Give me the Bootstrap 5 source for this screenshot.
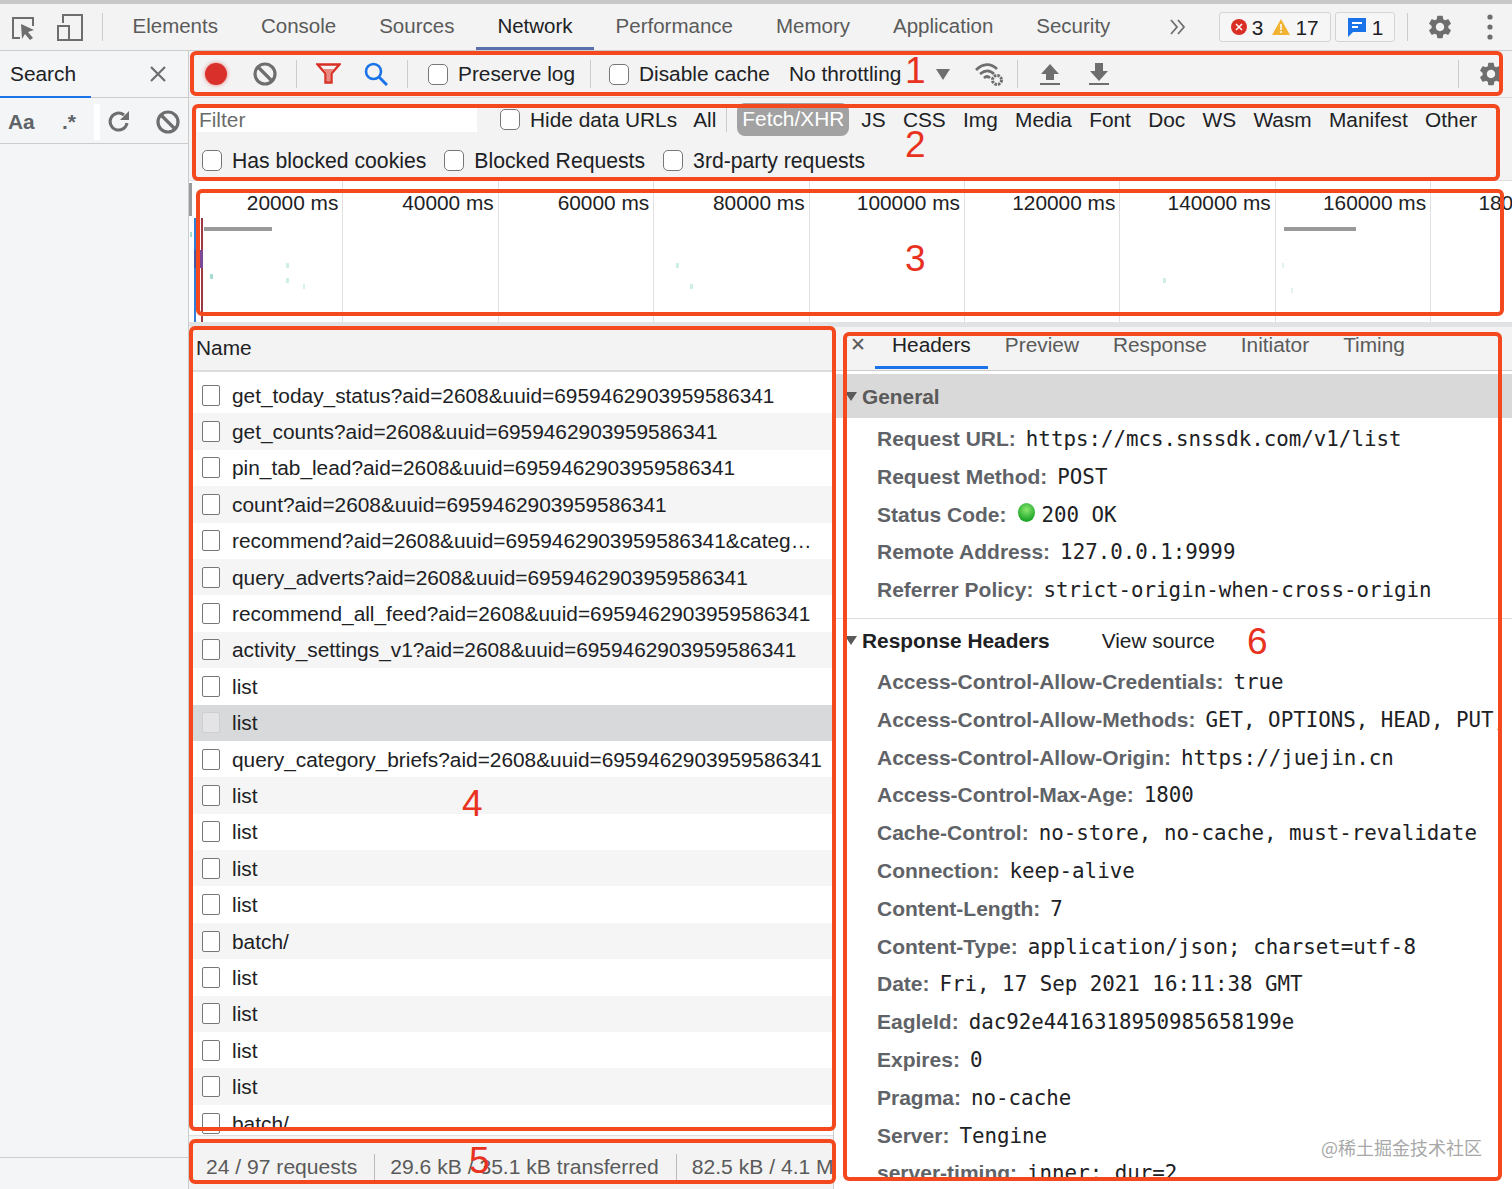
<!DOCTYPE html>
<html lang="en">
<head>
  <meta charset="UTF-8">
  <title>DevTools Network</title>
  <link href="https://cdn.jsdelivr.net/npm/bootstrap@5.3.0/dist/css/bootstrap.min.css" rel="stylesheet">
  <style>
    body { width: 1512px; height: 1189px; overflow: hidden; background: #fff; color: #202124; font-family: "Liberation Sans", Arial, sans-serif; font-size: 20.85px; line-height: 1.2; position: relative; }
    .top-strip { height: 4px; background: #c8c8c8; }
    .tab-bar { height: 47px; background: #f3f3f3; border-bottom: 1px solid #ccc; }
    .tab-icons { width: 102px; padding-left: 11px; gap: 21px; flex: none; }
    .tab-list { margin-left: 8px; }
    .dev-tab { color: #5a5a5a; padding: 0 21.5px; height: 46px; line-height: 44px; text-decoration: none; font-size: 20.5px; }
    .dev-tab.on { color: #202124; border-bottom: 3px solid #5b6fae; }
    .tab-sep { width: 1px; height: 28px; background: #ccc; flex: none; }
    .count-box { height: 30px; border: 1px solid #d4d4d4; border-radius: 3px; padding: 0 11px; gap: 5px; background: #f6f6f6; }
    .side-pane { width: 188px; height: 1138px; flex: none; background: #f3f5f6; }
    .side-head { height: 47px; border-bottom: 1px solid #ccc; position: relative; padding: 0 21px 0 10px; }
    .side-blue { position: absolute; left: 0; bottom: -1px; width: 91px; height: 2px; background: #1a73e8; }
    .side-tools { height: 46px; border-bottom: 1px solid #ccc; padding: 2px 0 0 8px; }
    .side-white { width: 6px; height: 36px; background: #fff; margin-right: 7px; }
    .side-gap { flex: 1; }
    .side-foot { height: 32px; border-top: 1px solid #ccc; }
    .main-pane { flex: 1; min-width: 0; border-left: 1px solid #ccc; }
    .tool-row { height: 47px; background: #f3f3f3; border-bottom: 1px solid #ddd; padding-left: 15px; }
    .tool-txt { margin-bottom: 2px; }
    .rec-dot { filter: drop-shadow(0 0 2px rgba(217, 48, 44, .6)); }
    .filter-box { height: 83px; background: #f3f3f3; padding: 4px 0 0 8px; border-bottom: 1px solid #ddd; }
    .filter-input { width: 280px; height: 25px; background: #fff; border: 0; padding: 0 2px; color: #6b6b6b; font-size: 20.85px; }
    .filter-input::placeholder { color: #6b6b6b; opacity: 1; }
    .type-pill { padding: 0 5px; height: 33px; line-height: 31px; border-radius: 8px; background: #a2a2a2; color: #fff; margin-right: 12px; }
    .type-tag { margin-right: 17.3px; }
    .filter-second { height: 41px; margin: 3px 0 0 5px; font-size: 21.2px; }
    input.dt-check[type=checkbox] { width: 20px; height: 21px; margin: 0 10px 0 0; flex: none; background-color: #fff; border: 1px solid #777; border-radius: 5px; }
    .time-strip { height: 141px; position: relative; overflow: hidden; }
    .tick { width: 155.4px; flex: none; height: 100%; border-right: 1px solid #e0e0e0; text-align: right; padding: 9px 4px 0 0; white-space: nowrap; }
    .tick:first-child { margin-left: -1px; }
    .tl-mark { position: absolute; }
    .split-bar { height: 5px; background: #e0e2e4; }
    .lower-split { height: 862px; }
    .name-pane { width: 645px; flex: none; border-right: 1px solid #ccc; position: relative; overflow: hidden; }
    .name-head { height: 45px; background: #f3f3f3; border-bottom: 2px solid #ddd; padding-left: 7px; line-height: 41px; }
    .name-list { height: 763px; padding-top: 5px; overflow: hidden; }
    .req-row { height: 36.4px; padding-left: 13px; white-space: nowrap; }
    .req-row:nth-child(even) { background: #f5f5f5; }
    .req-row.picked { background: #d8d9db; }
    input.row-check[type=checkbox] { width: 18px; height: 21px; margin: 0 12px 0 0; flex: none; border: 1px solid #777; border-radius: 2px; }
    .req-row.picked input.row-check[type=checkbox] { background-color: #e4e4e6; border-color: #cfcfcf; }
    .name-text { overflow: hidden; text-overflow: ellipsis; width: 592px; white-space: nowrap; }
    .name-text.cut-short { width: 582px; }
    .status-row { height: 54px; background: #f3f3f3; border-top: 1px solid #ddd; padding: 18px 0 0 17px; color: #5a5a5a; white-space: nowrap; overflow: hidden; font-size: 21.1px; }
    .status-cell { padding-right: 17px; margin-right: 15px; border-right: 1px solid #bbb; height: 26px; line-height: 26px; }
    .detail-pane { flex: 1; min-width: 0; height: 853px; overflow: hidden; white-space: nowrap; }
    .detail-tabs { height: 44px; background: #f3f3f3; border-bottom: 1px solid #ccc; padding-left: 16px; }
    .detail-close { width: 25px; color: #5a5a5a; font-size: 19px; line-height: 36px; }
    .detail-tab { color: #5a5a5a; padding: 0 17px; height: 42px; line-height: 36px; }
    .detail-tab.on { color: #202124; border-bottom: 3px solid #1a73e8; }
    .sect-head { height: 44px; margin-top: 3px; margin-bottom: 2px; background: #d9d9d9; color: #5a5a5a; font-weight: 700; padding-left: 11px; }
    .sect-plain { height: 44px; margin-top: 9px; margin-bottom: 1px; font-weight: 700; padding-left: 11px; border-top: 1px solid #ddd; }
    .tri { width: 0; height: 0; border-left: 6px solid transparent; border-right: 6px solid transparent; border-top: 9px solid #5a5a5a; margin-right: 5px; flex: none; }
    .kv-row { height: 37.8px; padding-left: 43px; display: flex; align-items: baseline; line-height: 37px; }
    .kv-row b { color: #5f6368; margin-right: 10px; font-weight: 700; flex: none; font-size: 21px; }
    .mono { font-family: "DejaVu Sans Mono", "Liberation Mono", monospace; font-size: 20.8px; color: #202124; flex: none; }
    .status-dot { width: 17px; height: 19px; border-radius: 50%; background: radial-gradient(circle at 50% 35%, #8ae86f, #1fa82a 70%); margin: 0 7px 0 1px; flex: none; }
    .red-box { position: absolute; border: 4px solid #f4481f; border-radius: 6px; pointer-events: none; }
    .red-num { position: absolute; color: #e8321f; font-size: 37px; line-height: 1; }
    .stamp { position: absolute; left: 1321px; top: 1137px; color: #a8a8a8; font-family: "Noto Sans CJK SC", sans-serif; font-size: 18px; line-height: 1.2; }
  </style>
</head>
<body>
  <div class="top-strip"></div>

  <!-- top tabs -->
  <div class="tab-bar d-flex align-items-center">
    <div class="tab-icons d-flex align-items-center">
      <svg width="25" height="28" viewBox="0 0 25 28" fill="none"><path d="M9 25H2V5h20v8" stroke="#6e6e6e" stroke-width="2"/><path d="M10 11l13 6-6 2 5 6-3 2-5-6-3 5z" fill="#6e6e6e"/></svg>
      <svg width="27" height="28" viewBox="0 0 27 28" fill="none"><path d="M6 10V2h19v25H12" stroke="#6e6e6e" stroke-width="2"/><rect x="1" y="13" width="11" height="14" stroke="#6e6e6e" stroke-width="2"/></svg>
    </div>
    <span class="tab-sep"></span>
    <div class="tab-list d-flex align-self-start">
      <a class="dev-tab" href="#">Elements</a>
      <a class="dev-tab" href="#">Console</a>
      <a class="dev-tab" href="#">Sources</a>
      <a class="dev-tab on" href="#">Network</a>
      <a class="dev-tab" href="#">Performance</a>
      <a class="dev-tab" href="#">Memory</a>
      <a class="dev-tab" href="#">Application</a>
      <a class="dev-tab" href="#">Security</a>
    </div>
    <svg style="margin-left:37px" width="18" height="16" viewBox="0 0 18 16" fill="none"><path d="M2 1l6 7-6 7M9 1l6 7-6 7" stroke="#6e6e6e" stroke-width="1.8"/></svg>
    <div class="count-box d-flex align-items-center" style="margin-left:32px">
      <svg width="16" height="16" viewBox="0 0 16 16"><circle cx="8" cy="8" r="8" fill="#d93025"/><path d="M5 5l6 6M11 5l-6 6" stroke="#fff" stroke-width="1.5"/></svg>
      <span>3</span>
      <svg class="ms-1" width="18" height="16" viewBox="0 0 18 16"><path d="M9 0l9 16H0z" fill="#f2b233"/><path d="M9 5v6M9 12v2" stroke="#fff" stroke-width="1.5"/></svg>
      <span>17</span>
    </div>
    <div class="count-box d-flex align-items-center" style="margin-left:4px">
      <svg width="20" height="20" viewBox="0 0 20 20"><path d="M1 1h18v14H6l-5 5z" fill="#1a73e8"/><path d="M5 6h10M5 10h6" stroke="#fff" stroke-width="2"/></svg>
      <span>1</span>
    </div>
    <span class="tab-sep" style="margin-left:12px"></span>
    <svg style="margin-left:18px" width="28" height="28" viewBox="0 0 24 24"><path fill="#6e6e6e" d="M19.14 12.94c.04-.3.06-.61.06-.94 0-.32-.02-.64-.07-.94l2.03-1.58a.49.49 0 0 0 .12-.61l-1.92-3.32a.488.488 0 0 0-.59-.22l-2.39.96c-.5-.38-1.03-.7-1.62-.94l-.36-2.54a.484.484 0 0 0-.48-.41h-3.84c-.24 0-.43.17-.47.41l-.36 2.54c-.59.24-1.13.57-1.62.94l-2.39-.96c-.22-.08-.47 0-.59.22L2.74 8.87c-.12.21-.08.47.12.61l2.03 1.58c-.05.3-.09.63-.09.94s.02.64.07.94l-2.03 1.58a.49.49 0 0 0-.12.61l1.92 3.32c.12.22.37.29.59.22l2.39-.96c.5.38 1.03.7 1.62.94l.36 2.54c.05.24.24.41.48.41h3.84c.24 0 .44-.17.47-.41l.36-2.54c.59-.24 1.13-.56 1.62-.94l2.39.96c.22.08.47 0 .59-.22l1.92-3.32c.12-.22.07-.47-.12-.61l-2.01-1.58zM12 15.6c-1.98 0-3.6-1.62-3.6-3.6s1.62-3.6 3.6-3.6 3.6 1.62 3.6 3.6-1.62 3.6-3.6 3.6z"/></svg>
    <svg style="margin-left:33px" width="6" height="26" viewBox="0 0 6 26"><circle cx="3" cy="3" r="2.6" fill="#6e6e6e"/><circle cx="3" cy="13" r="2.6" fill="#6e6e6e"/><circle cx="3" cy="23" r="2.6" fill="#6e6e6e"/></svg>
  </div>

  <div class="d-flex">
    <!-- search drawer -->
    <div class="side-pane d-flex flex-column">
      <div class="side-head d-flex align-items-center justify-content-between">
        <span class="tool-txt">Search</span>
        <svg width="18" height="18" viewBox="0 0 18 18"><path d="M2 2l14 14M16 2L2 16" stroke="#6e6e6e" stroke-width="2.2"/></svg>
        <span class="side-blue"></span>
      </div>
      <div class="side-tools d-flex align-items-center">
        <b style="color:#5f6368;width:54px">Aa</b>
        <b style="color:#5f6368;width:32px">.*</b>
        <span class="side-white"></span>
        <svg width="24" height="24" viewBox="0 0 24 24" fill="none"><path d="M20 13a8.5 8.5 0 1 1-3-8" stroke="#6e6e6e" stroke-width="3"/><path d="M22 1v9h-9z" fill="#6e6e6e"/></svg>
        <svg class="ms-auto" style="margin-right:8px" width="24" height="24" viewBox="0 0 24 24" fill="none"><circle cx="12" cy="12" r="10" stroke="#6e6e6e" stroke-width="3.2"/><path d="M5 5l14 14" stroke="#6e6e6e" stroke-width="3.2"/></svg>
      </div>
      <div class="side-gap"></div>
      <div class="side-foot"></div>
    </div>

    <div class="main-pane">
      <!-- record toolbar -->
      <div class="tool-row d-flex align-items-center">
        <svg class="rec-dot" width="24" height="24" viewBox="0 0 24 24"><circle cx="12" cy="12" r="11" fill="#d9302c"/></svg>
        <svg style="margin-left:25px" width="24" height="24" viewBox="0 0 24 24" fill="none"><circle cx="12" cy="12" r="10" stroke="#6e6e6e" stroke-width="3.2"/><path d="M5 5l14 14" stroke="#6e6e6e" stroke-width="3.2"/></svg>
        <span class="tab-sep" style="margin-left:19px"></span>
        <svg style="margin-left:19px" width="25" height="22" viewBox="0 0 25 22" fill="none"><path d="M1.5 1.5h22l-8 9v9h-6v-9z" stroke="#d93025" stroke-width="2.4"/><path d="M7 6h11l-4 5v7h-3v-7z" fill="#e88a80"/></svg>
        <svg style="margin-left:23px" width="24" height="24" viewBox="0 0 24 24" fill="none"><circle cx="9.5" cy="9.5" r="7.5" stroke="#1a73e8" stroke-width="2.6"/><path d="M15 15l8 8" stroke="#1a73e8" stroke-width="3"/></svg>
        <span class="tab-sep" style="margin-left:19px"></span>
        <input class="form-check-input dt-check" type="checkbox" style="margin-left:20px">
        <span class="tool-txt">Preserve log</span>
        <span class="tab-sep" style="margin-left:15px"></span>
        <input class="form-check-input dt-check" type="checkbox" style="margin-left:18px">
        <span class="tool-txt">Disable cache</span>
        <span class="tool-txt" style="margin-left:19px">No throttling</span>
        <span style="margin-left:35px;width:0;height:0;border-left:7px solid transparent;border-right:7px solid transparent;border-top:11px solid #6e6e6e"></span>
        <svg style="margin-left:24px" width="30" height="26" viewBox="0 0 30 26" fill="none"><path d="M2 9c7-7 15-7 21-1M6 13c5-4 10-4 14 0M10 17c2-2 4-2 6 0" stroke="#6e6e6e" stroke-width="2.6"/><circle cx="23" cy="19" r="4.5" stroke="#6e6e6e" stroke-width="3" stroke-dasharray="2.5 1"/></svg>
        <span class="tab-sep" style="margin-left:13px"></span>
        <svg style="margin-left:22px" width="20" height="24" viewBox="0 0 20 24"><path d="M10 2l9 10h-5v6H6v-6H1z" fill="#6e6e6e"/><path d="M0 22h20" stroke="#6e6e6e" stroke-width="2"/></svg>
        <svg style="margin-left:29px" width="20" height="24" viewBox="0 0 20 24"><path d="M10 19L1 9h5V1h8v8h5z" fill="#6e6e6e"/><path d="M0 22h20" stroke="#6e6e6e" stroke-width="2"/></svg>
        <span class="tab-sep ms-auto"></span>
        <svg style="margin:0 7px 0 18px" width="28" height="28" viewBox="0 0 24 24"><path fill="#6e6e6e" d="M19.14 12.94c.04-.3.06-.61.06-.94 0-.32-.02-.64-.07-.94l2.03-1.58a.49.49 0 0 0 .12-.61l-1.92-3.32a.488.488 0 0 0-.59-.22l-2.39.96c-.5-.38-1.03-.7-1.62-.94l-.36-2.54a.484.484 0 0 0-.48-.41h-3.84c-.24 0-.43.17-.47.41l-.36 2.54c-.59.24-1.13.57-1.62.94l-2.39-.96c-.22-.08-.47 0-.59.22L2.74 8.87c-.12.21-.08.47.12.61l2.03 1.58c-.05.3-.09.63-.09.94s.02.64.07.94l-2.03 1.58a.49.49 0 0 0-.12.61l1.92 3.32c.12.22.37.29.59.22l2.39-.96c.5.38 1.03.7 1.62.94l.36 2.54c.05.24.24.41.48.41h3.84c.24 0 .44-.17.47-.41l.36-2.54c.59-.24 1.13-.56 1.62-.94l2.39.96c.22.08.47 0 .59-.22l1.92-3.32c.12-.22.07-.47-.12-.61l-2.01-1.58zM12 15.6c-1.98 0-3.6-1.62-3.6-3.6s1.62-3.6 3.6-3.6 3.6 1.62 3.6 3.6-1.62 3.6-3.6 3.6z"/></svg>
      </div>

      <!-- filter -->
      <div class="filter-box">
        <div class="d-flex align-items-center" style="height:35px">
          <input class="filter-input" type="text" placeholder="Filter">
          <input class="form-check-input dt-check" type="checkbox" style="margin-left:23px">
          <span>Hide data URLs</span>
          <span style="margin-left:16px">All</span>
          <span class="tab-sep" style="margin:0 10px;height:24px"></span>
          <span class="type-pill">Fetch/XHR</span>
          <span class="type-tag">JS</span><span class="type-tag">CSS</span><span class="type-tag">Img</span><span class="type-tag">Media</span><span class="type-tag">Font</span><span class="type-tag">Doc</span><span class="type-tag">WS</span><span class="type-tag">Wasm</span><span class="type-tag">Manifest</span><span>Other</span>
        </div>
        <div class="filter-second d-flex align-items-center">
          <input class="form-check-input dt-check" type="checkbox"><span>Has blocked cookies</span>
          <input class="form-check-input dt-check" type="checkbox" style="margin-left:18px"><span>Blocked Requests</span>
          <input class="form-check-input dt-check" type="checkbox" style="margin-left:18px"><span>3rd-party requests</span>
        </div>
      </div>

      <!-- timeline overview -->
      <div class="time-strip d-flex">
        <div class="tick">20000 ms</div>
        <div class="tick">40000 ms</div>
        <div class="tick">60000 ms</div>
        <div class="tick">80000 ms</div>
        <div class="tick">100000 ms</div>
        <div class="tick">120000 ms</div>
        <div class="tick">140000 ms</div>
        <div class="tick">160000 ms</div>
        <div class="tick">180000 ms</div>
        <span class="tl-mark" style="left:0;top:2px;width:3px;height:33px;background:#9a9a9a"></span>
        <span class="tl-mark" style="left:1px;top:51px;width:2px;height:5px;background:#a7dcd0"></span>
        <span class="tl-mark" style="left:5px;top:37px;width:2px;height:104px;background:#2f7fd8"></span>
        <span class="tl-mark" style="left:12px;top:37px;width:2px;height:104px;background:#9c3a44"></span>
        <span class="tl-mark" style="left:5px;top:69px;width:3px;height:18px;background:#3f5ba8"></span>
        <span class="tl-mark" style="left:11px;top:69px;width:3px;height:18px;background:#7a4a96"></span>
        <span class="tl-mark" style="left:15px;top:46px;width:68px;height:4px;background:#999"></span>
        <span class="tl-mark" style="left:1095px;top:46px;width:72px;height:4px;background:#999"></span>
        <span class="tl-mark" style="left:21px;top:93px;width:3px;height:5px;background:#a7dcd0"></span>
        <span class="tl-mark" style="left:97px;top:82px;width:3px;height:5px;background:#cfeee7"></span>
        <span class="tl-mark" style="left:97px;top:97px;width:3px;height:5px;background:#cfeee7"></span>
        <span class="tl-mark" style="left:114px;top:103px;width:2px;height:5px;background:#d8f0ea"></span>
        <span class="tl-mark" style="left:487px;top:82px;width:3px;height:5px;background:#cfeee7"></span>
        <span class="tl-mark" style="left:501px;top:103px;width:3px;height:5px;background:#cfeee7"></span>
        <span class="tl-mark" style="left:974px;top:97px;width:3px;height:5px;background:#cfeee7"></span>
        <span class="tl-mark" style="left:1093px;top:82px;width:2px;height:5px;background:#e0f3ee"></span>
        <span class="tl-mark" style="left:1102px;top:107px;width:2px;height:5px;background:#e0f3ee"></span>
      </div>
      <div class="split-bar"></div>

      <div class="lower-split d-flex">
        <!-- request list -->
        <div class="name-pane">
          <div class="name-head">Name</div>
          <div class="name-list">
            <div class="req-row d-flex align-items-center"><input class="form-check-input row-check" type="checkbox"><span class="name-text">get_today_status?aid=2608&amp;uuid=6959462903959586341</span></div>
            <div class="req-row d-flex align-items-center"><input class="form-check-input row-check" type="checkbox"><span class="name-text">get_counts?aid=2608&amp;uuid=6959462903959586341</span></div>
            <div class="req-row d-flex align-items-center"><input class="form-check-input row-check" type="checkbox"><span class="name-text">pin_tab_lead?aid=2608&amp;uuid=6959462903959586341</span></div>
            <div class="req-row d-flex align-items-center"><input class="form-check-input row-check" type="checkbox"><span class="name-text">count?aid=2608&amp;uuid=6959462903959586341</span></div>
            <div class="req-row d-flex align-items-center"><input class="form-check-input row-check" type="checkbox"><span class="name-text cut-short">recommend?aid=2608&amp;uuid=6959462903959586341&amp;category_id=1</span></div>
            <div class="req-row d-flex align-items-center"><input class="form-check-input row-check" type="checkbox"><span class="name-text">query_adverts?aid=2608&amp;uuid=6959462903959586341</span></div>
            <div class="req-row d-flex align-items-center"><input class="form-check-input row-check" type="checkbox"><span class="name-text">recommend_all_feed?aid=2608&amp;uuid=6959462903959586341</span></div>
            <div class="req-row d-flex align-items-center"><input class="form-check-input row-check" type="checkbox"><span class="name-text">activity_settings_v1?aid=2608&amp;uuid=6959462903959586341</span></div>
            <div class="req-row d-flex align-items-center"><input class="form-check-input row-check" type="checkbox"><span class="name-text">list</span></div>
            <div class="req-row picked d-flex align-items-center"><input class="form-check-input row-check" type="checkbox"><span class="name-text">list</span></div>
            <div class="req-row d-flex align-items-center"><input class="form-check-input row-check" type="checkbox"><span class="name-text">query_category_briefs?aid=2608&amp;uuid=6959462903959586341</span></div>
            <div class="req-row d-flex align-items-center"><input class="form-check-input row-check" type="checkbox"><span class="name-text">list</span></div>
            <div class="req-row d-flex align-items-center"><input class="form-check-input row-check" type="checkbox"><span class="name-text">list</span></div>
            <div class="req-row d-flex align-items-center"><input class="form-check-input row-check" type="checkbox"><span class="name-text">list</span></div>
            <div class="req-row d-flex align-items-center"><input class="form-check-input row-check" type="checkbox"><span class="name-text">list</span></div>
            <div class="req-row d-flex align-items-center"><input class="form-check-input row-check" type="checkbox"><span class="name-text">batch/</span></div>
            <div class="req-row d-flex align-items-center"><input class="form-check-input row-check" type="checkbox"><span class="name-text">list</span></div>
            <div class="req-row d-flex align-items-center"><input class="form-check-input row-check" type="checkbox"><span class="name-text">list</span></div>
            <div class="req-row d-flex align-items-center"><input class="form-check-input row-check" type="checkbox"><span class="name-text">list</span></div>
            <div class="req-row d-flex align-items-center"><input class="form-check-input row-check" type="checkbox"><span class="name-text">list</span></div>
            <div class="req-row d-flex align-items-center"><input class="form-check-input row-check" type="checkbox"><span class="name-text">batch/</span></div>
          </div>
          <div class="status-row d-flex align-items-start">
            <span class="status-cell">24 / 97 requests</span>
            <span class="status-cell">29.6 kB / 35.1 kB transferred</span>
            <span>82.5 kB / 4.1 MB resources</span>
          </div>
        </div>

        <!-- request details -->
        <div class="detail-pane">
          <div class="detail-tabs d-flex align-items-start">
            <span class="detail-close">✕</span>
            <span class="detail-tab on">Headers</span>
            <span class="detail-tab">Preview</span>
            <span class="detail-tab">Response</span>
            <span class="detail-tab">Initiator</span>
            <span class="detail-tab">Timing</span>
          </div>
          <div class="sect-head d-flex align-items-center"><span class="tri"></span>General</div>
          <div class="kv-row"><b>Request URL:</b><span class="mono">https://mcs.snssdk.com/v1/list</span></div>
          <div class="kv-row"><b>Request Method:</b><span class="mono">POST</span></div>
          <div class="kv-row"><b>Status Code:</b><span class="status-dot"></span><span class="mono">200 OK</span></div>
          <div class="kv-row"><b>Remote Address:</b><span class="mono">127.0.0.1:9999</span></div>
          <div class="kv-row"><b>Referrer Policy:</b><span class="mono">strict-origin-when-cross-origin</span></div>
          <div class="sect-plain d-flex align-items-center"><span class="tri"></span>Response Headers<span class="fw-normal" style="margin-left:52px">View source</span></div>
          <div class="kv-row"><b>Access-Control-Allow-Credentials:</b><span class="mono">true</span></div>
          <div class="kv-row"><b>Access-Control-Allow-Methods:</b><span class="mono">GET, OPTIONS, HEAD, PUT, POST</span></div>
          <div class="kv-row"><b>Access-Control-Allow-Origin:</b><span class="mono">https://juejin.cn</span></div>
          <div class="kv-row"><b>Access-Control-Max-Age:</b><span class="mono">1800</span></div>
          <div class="kv-row"><b>Cache-Control:</b><span class="mono">no-store, no-cache, must-revalidate</span></div>
          <div class="kv-row"><b>Connection:</b><span class="mono">keep-alive</span></div>
          <div class="kv-row"><b>Content-Length:</b><span class="mono">7</span></div>
          <div class="kv-row"><b>Content-Type:</b><span class="mono">application/json; charset=utf-8</span></div>
          <div class="kv-row"><b>Date:</b><span class="mono">Fri, 17 Sep 2021 16:11:38 GMT</span></div>
          <div class="kv-row"><b>EagleId:</b><span class="mono">dac92e4416318950985658199e</span></div>
          <div class="kv-row"><b>Expires:</b><span class="mono">0</span></div>
          <div class="kv-row"><b>Pragma:</b><span class="mono">no-cache</span></div>
          <div class="kv-row"><b>Server:</b><span class="mono">Tengine</span></div>
          <div class="kv-row"><b>server-timing:</b><span class="mono">inner; dur=2</span></div>
        </div>
      </div>
    </div>
  </div>

  <!-- annotations drawn on top of the screenshot -->
  <div class="red-box" style="left:190px;top:51px;width:1313px;height:45px"></div>
  <div class="red-box" style="left:192px;top:104px;width:1308px;height:77px"></div>
  <div class="red-box" style="left:196px;top:189px;width:1308px;height:127px"></div>
  <div class="red-box" style="left:189px;top:326px;width:647px;height:805px"></div>
  <div class="red-box" style="left:189px;top:1139px;width:647px;height:45px"></div>
  <div class="red-box" style="left:843px;top:332px;width:659px;height:849px"></div>
  <span class="red-num" style="left:905px;top:52px">1</span>
  <span class="red-num" style="left:905px;top:126px">2</span>
  <span class="red-num" style="left:905px;top:240px">3</span>
  <span class="red-num" style="left:462px;top:785px">4</span>
  <span class="red-num" style="left:469px;top:1142px">5</span>
  <span class="red-num" style="left:1247px;top:623px">6</span>
  <span class="stamp">@稀土掘金技术社区</span>
  <script src="https://cdn.jsdelivr.net/npm/bootstrap@5.3.0/dist/js/bootstrap.bundle.min.js"></script>
</body>
</html>
